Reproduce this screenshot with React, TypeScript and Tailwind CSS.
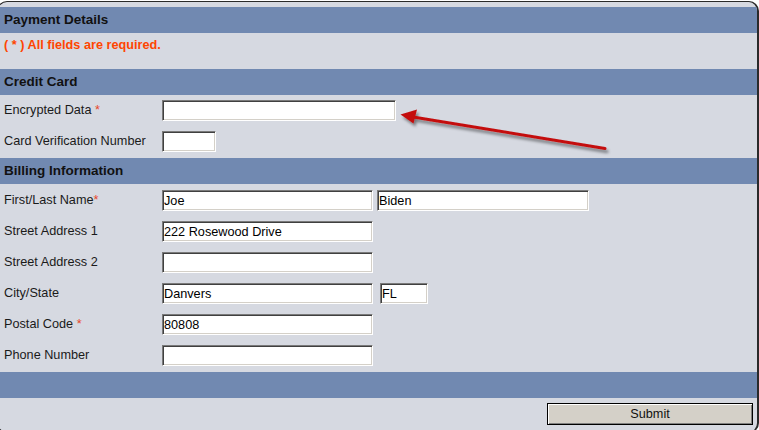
import React from "react";

const inputCls =
  "h-[21px] bg-white border border-t-[#7a7a7a] border-l-[#7a7a7a] border-r-white border-b-white shadow-[inset_1px_1px_0_#404040,inset_-1px_-1px_0_#d4d0c8] px-[1px] text-[12.7px] text-black leading-none outline-none";

function Bar({ title }: { title?: string }) {
  return (
    <div className="h-[26px] bg-[#7189b1] pl-[6px] flex items-center text-[13.5px] font-bold text-[#111]">
      {title}
    </div>
  );
}

function Req({ space = true }: { space?: boolean }) {
  return <span className="text-[#e8472a]">{space ? " *" : "*"}</span>;
}

function Row({ label, children }: { label: React.ReactNode; children: React.ReactNode }) {
  return (
    <div className="h-[31px] flex items-center pl-[6px]">
      <div className="w-[158px] text-[12.7px] text-[#1a1a1a]">{label}</div>
      <div className="flex items-center">{children}</div>
    </div>
  );
}

function Arrow() {
  return (
    <svg className="absolute left-0 top-0 pointer-events-none" width="759" height="430" viewBox="0 0 759 430">
      <defs>
        <filter id="sh" x="-10%" y="-50%" width="120%" height="200%">
          <feDropShadow dx="2" dy="3" stdDeviation="1.6" floodColor="#000" floodOpacity="0.45" />
        </filter>
      </defs>
      <g filter="url(#sh)">
        <line x1="413" y1="117" x2="605" y2="148.5" stroke="#c41010" strokeWidth="3" strokeLinecap="round" />
        <polygon points="400.5,114.5 417,109.5 413.5,123.5" fill="#c41010" />
      </g>
    </svg>
  );
}

export default function App() {
  return (
    <div
      className="relative w-[759px] h-[430px] overflow-hidden bg-white pt-px"
      style={{ fontFamily: '"Liberation Sans", Arial, sans-serif' }}
    >
      <div className="ml-[-3px] w-[762px] h-[432px] border border-r-2 border-[#2a2a2a] rounded-[10px] bg-[#d6d9e1] overflow-hidden pt-[5px]">
        <Bar title="Payment Details" />
        <div className="h-[36px] pl-[6px] pt-[4px] leading-[16px] text-[12.7px] font-bold text-[#ff4500]">
          ( * ) All fields are required.
        </div>

        <Bar title="Credit Card" />
        <Row label={<>Encrypted Data<Req /></>}>
          <input className={`${inputCls} w-[234px]`} defaultValue="" />
        </Row>
        <Row label="Card Verification Number">
          <input className={`${inputCls} w-[54px] h-[20px]`} defaultValue="" />
        </Row>

        <div className="mt-px">
          <Bar title="Billing Information" />
        </div>
        <div className="pt-[1px] pb-[1px]">
          <Row label={<>First/Last Name<Req space={false} /></>}>
            <input className={`${inputCls} w-[211px]`} defaultValue="Joe" />
            <input className={`${inputCls} w-[212px] ml-[4px]`} defaultValue="Biden" />
          </Row>
          <Row label="Street Address 1">
            <input className={`${inputCls} w-[211px]`} defaultValue="222 Rosewood Drive" />
          </Row>
          <Row label="Street Address 2">
            <input className={`${inputCls} w-[211px]`} defaultValue="" />
          </Row>
          <Row label="City/State">
            <input className={`${inputCls} w-[211px]`} defaultValue="Danvers" />
            <input className={`${inputCls} w-[48px] ml-[7px]`} defaultValue="FL" />
          </Row>
          <Row label={<>Postal Code<Req /></>}>
            <input className={`${inputCls} w-[211px]`} defaultValue="80808" />
          </Row>
          <Row label="Phone Number">
            <input className={`${inputCls} w-[211px]`} defaultValue="" />
          </Row>
        </div>

        <Bar />
        <div className="flex justify-end pt-[5px] pr-[4px]">
          <button className="w-[206px] h-[22px] bg-[#d4d0c8] border border-black shadow-[inset_1px_1px_0_#ffffff,inset_-1px_-1px_0_#808080] text-[12.7px] text-[#111] leading-none">
            Submit
          </button>
        </div>
      </div>
      <Arrow />
    </div>
  );
}
